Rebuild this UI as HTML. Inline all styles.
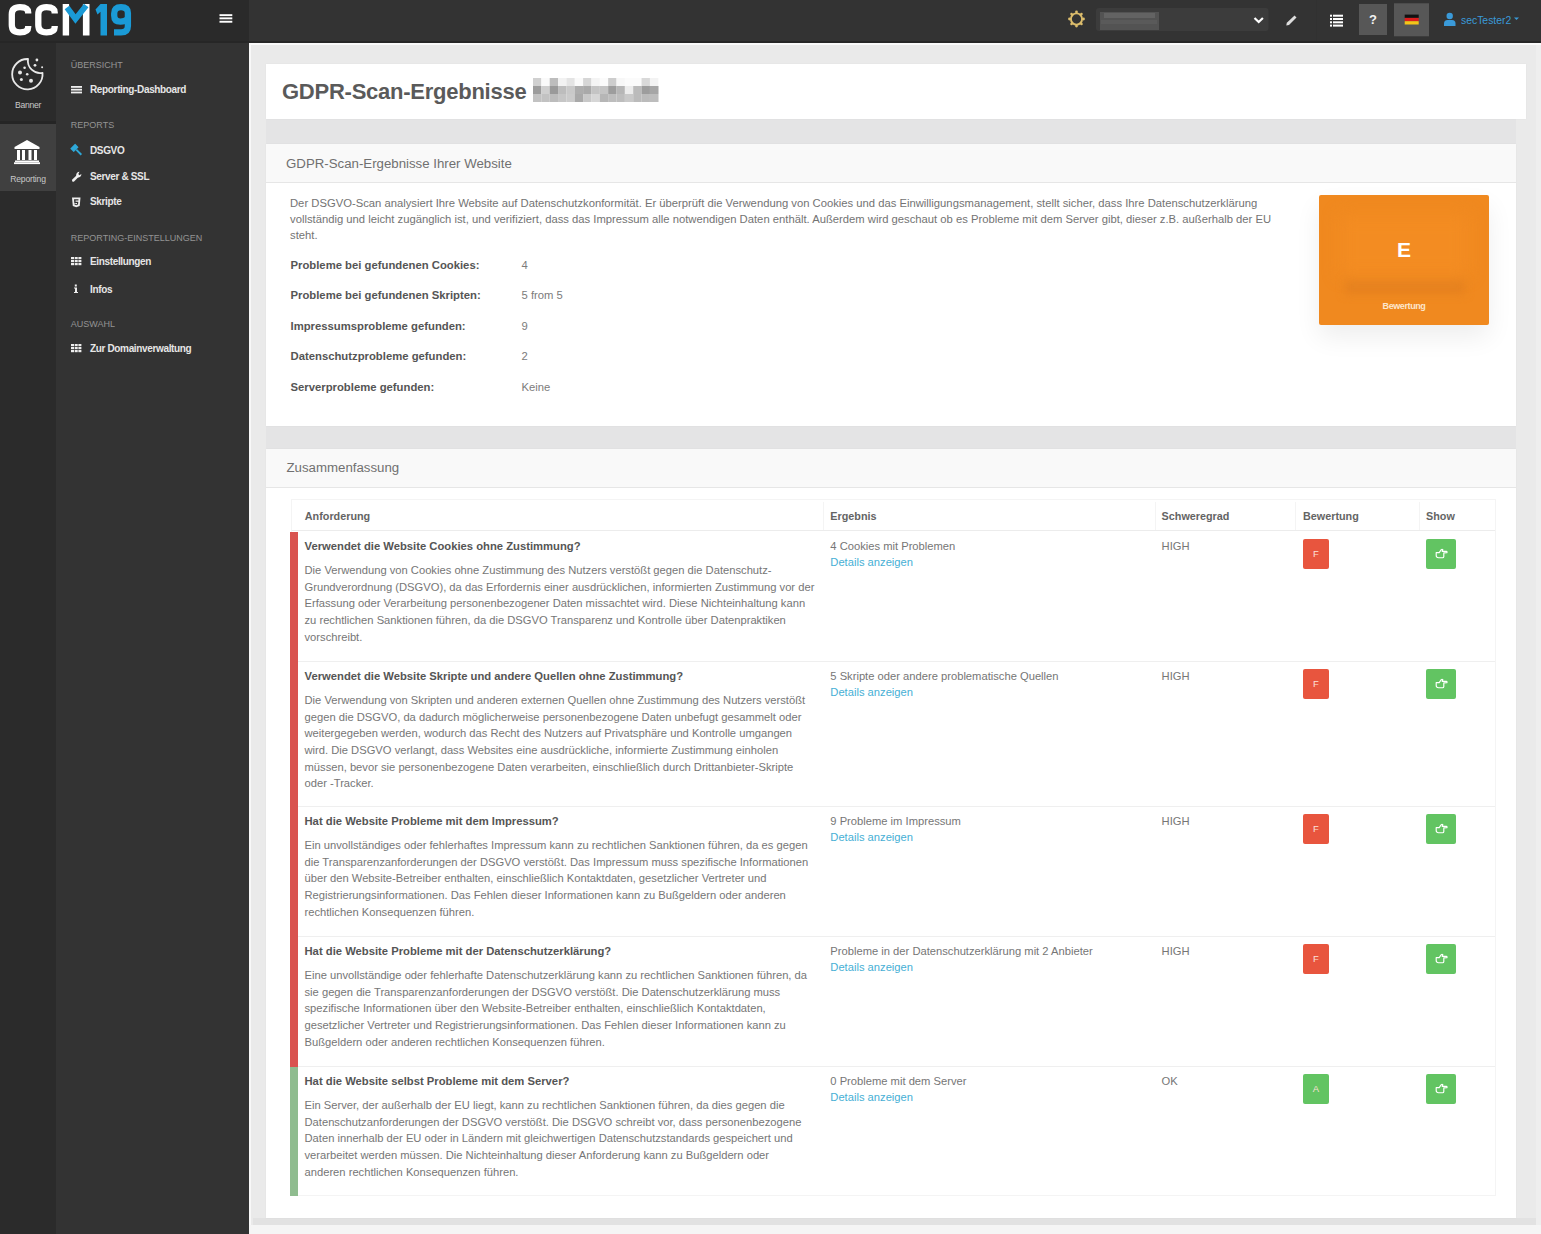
<!DOCTYPE html>
<html><head><meta charset="utf-8">
<style>
*{box-sizing:border-box}
html,body{margin:0;padding:0}
body{width:1541px;height:1234px;overflow:hidden;position:relative;background:#eaeaea;font-family:"Liberation Sans",sans-serif;color:#666}
.a{position:absolute}
.nw{white-space:nowrap}
/* sidebar */
.sh{position:absolute;left:70.8px;font-size:9px;color:#939393;letter-spacing:0}
.si{position:absolute;left:90px;font-size:10px;font-weight:bold;color:#e6e6e6;letter-spacing:-0.35px}
.ic{position:absolute;left:71px}
/* cards */
.card{position:absolute;background:#fff;box-shadow:0 0 2px rgba(0,0,0,0.04)}
.chead{position:absolute;left:0;top:0;right:0;height:39px;background:#f9f9f9;border-bottom:1px solid #e6e6e6}
.ctitle{position:absolute;left:20px;font-size:13.25px;color:#6b6b6b}
.lab{position:absolute;left:290px;font-size:11.25px;font-weight:bold;color:#555}
.val{position:absolute;left:521px;font-size:11.25px;color:#777}
</style></head>
<body>
<!-- top bar -->
<div class="a" style="left:0;top:0;width:1541px;height:43px;background:#333;border-bottom:2px solid #272727"></div>
<div class="a" style="left:0;top:0;width:249px;height:43px;background:#2a2a2a;border-bottom:2px solid #262626"></div>

<!-- sidebar columns -->
<div class="a" style="left:0;top:43px;width:56px;height:1191px;background:#2b2b2b"></div>
<div class="a" style="left:0;top:121px;width:56px;height:3px;background:#252525"></div>
<div class="a" style="left:0;top:124px;width:56px;height:67px;background:#404040"></div>
<div class="a" style="left:56px;top:43px;width:193px;height:1191px;background:#333"></div>


<!-- logo -->
<svg class="a" style="left:0;top:0" width="249" height="43" viewBox="0 0 249 43">
  <g fill="none" stroke="#fff" stroke-width="6.3" stroke-linecap="butt">
    <path d="M28.2 13.5 L28.2 12.5 Q28.2 7.15 20 7.15 Q11.8 7.15 11.8 14.5 L11.8 25 Q11.8 32.35 20 32.35 Q28.2 32.35 28.2 27 L28.2 26"/>
    <path d="M54.7 13.5 L54.7 12.5 Q54.7 7.15 46.5 7.15 Q38.3 7.15 38.3 14.5 L38.3 25 Q38.3 32.35 46.5 32.35 Q54.7 32.35 54.7 27 L54.7 26"/>
  </g>
  <rect x="62.7" y="4" width="6.4" height="31.5" fill="#fff"/>
  <rect x="82.9" y="4" width="6.6" height="31.5" fill="#fff"/>
  <polyline points="67,7.5 75.5,19 86.2,5.5" fill="none" stroke="#1a9ad6" stroke-width="5.8" stroke-linejoin="miter" stroke-miterlimit="3"/>
  <g fill="#1a9ad6">
    <path d="M95.5 9.5 L100.5 4 L107 4 L107 35.5 L100.5 35.5 L100.5 11.8 L97.5 14.5 Z"/>
  </g>
  <path d="M127.9 20 L127.9 13 Q127.9 7.15 121 7.15 Q114.2 7.15 114.2 13.5 L114.2 15.5 Q114.2 21.7 120.5 21.7 Q125 21.7 127.9 18.5 M127.9 16 L127.9 26 Q127.9 32.35 121 32.35 L114 32.35" fill="none" stroke="#1a9ad6" stroke-width="6.3"/>
  <rect x="219.5" y="14.2" width="12.8" height="1.9" fill="#fff"/>
  <rect x="219.5" y="17.4" width="12.8" height="1.9" fill="#fff"/>
  <rect x="219.5" y="20.8" width="12.8" height="1.9" fill="#fff"/>
</svg>


<!-- topbar right -->
<svg class="a" style="left:1060px;top:0" width="481" height="43" viewBox="1060 0 481 43">
  <circle cx="1076.5" cy="19" r="5.6" fill="none" stroke="#dcbd6c" stroke-width="1.9"/>
  <g fill="#dcbd6c">
    <circle cx="1076.5" cy="12" r="1.4"/><circle cx="1076.5" cy="26" r="1.4"/>
    <circle cx="1069.5" cy="19" r="1.4"/><circle cx="1083.5" cy="19" r="1.4"/>
    <circle cx="1071.55" cy="14.05" r="1.3"/><circle cx="1081.45" cy="14.05" r="1.3"/>
    <circle cx="1071.55" cy="23.95" r="1.3"/><circle cx="1081.45" cy="23.95" r="1.3"/>
  </g>
  <rect x="1096" y="8" width="172.5" height="23" rx="3" fill="#3c3c3c"/>
  <rect x="1100" y="12" width="59" height="18" fill="#535353"/>
  <rect x="1104" y="13" width="51" height="5" fill="#636363"/>
  <rect x="1101" y="20" width="56" height="4" fill="#5a5a5a"/>
  <polyline points="1254.5,18 1258.7,22 1262.9,18" fill="none" stroke="#fff" stroke-width="2.2"/>
  <path d="M1294.5 15.5 L1296.5 17.5 L1289 25 L1286.3 25.5 L1286.8 22.8 Z" fill="#dedede"/>
  <rect x="1316" y="0" width="1" height="41" fill="#313131"/>
  <g fill="#fff">
    <rect x="1330" y="14.7" width="2" height="2"/><rect x="1333" y="14.7" width="10" height="2"/>
    <rect x="1330" y="18" width="2" height="2"/><rect x="1333" y="18" width="10" height="2"/>
    <rect x="1330" y="21.3" width="2" height="2"/><rect x="1333" y="21.3" width="10" height="2"/>
    <rect x="1330" y="24.6" width="2" height="2"/><rect x="1333" y="24.6" width="10" height="2"/>
  </g>
  <rect x="1359" y="4" width="28" height="31" fill="#575757"/>
  <text x="1373" y="24" font-family="Liberation Sans" font-weight="bold" font-size="13" fill="#f2f2f2" text-anchor="middle">?</text>
  <rect x="1394" y="3.3" width="35" height="33" fill="#575757"/>
  <rect x="1404.7" y="14.6" width="14" height="3.3" fill="#111"/>
  <rect x="1404.7" y="17.9" width="14" height="3.3" fill="#dd1d1d"/>
  <rect x="1404.7" y="21.2" width="14" height="3.3" fill="#f5c518"/>
  <circle cx="1449.7" cy="16" r="3.2" fill="#3a9ad9"/>
  <path d="M1444 26 L1444 23.5 Q1444 20 1447.5 20 L1452 20 Q1455.5 20 1455.5 23.5 L1455.5 26 Z" fill="#3a9ad9"/>
</svg>
<div class="a nw" style="left:1461px;top:14.5px;font-size:10.4px;line-height:11px;color:#3a9ad9">secTester2</div>
<svg class="a" style="left:1513px;top:16px" width="8" height="6"><path d="M1 1.5 L6 1.5 L3.5 4 Z" fill="#3a9ad9"/></svg>

<!-- icon col: cookie -->
<svg class="a" style="left:0;top:43px" width="56" height="150" viewBox="0 43 56 150">
  <path d="M28 59 A15.2 15.2 0 1 0 42.5 72.8 A12.3 12.3 0 0 1 28 59 Z" fill="none" stroke="#e8e8e8" stroke-width="1.8" stroke-linejoin="round"/>
  <circle cx="20" cy="72.4" r="2" fill="#e8e8e8"/>
  <circle cx="24.6" cy="67.8" r="1.3" fill="#e8e8e8"/>
  <circle cx="27.2" cy="74.3" r="1.3" fill="#e8e8e8"/>
  <circle cx="21.4" cy="79.5" r="1.5" fill="#e8e8e8"/>
  <circle cx="31" cy="80.8" r="2" fill="#e8e8e8"/>
  <circle cx="36.9" cy="60" r="1.4" fill="#e8e8e8"/>
  <circle cx="35" cy="65.3" r="1.4" fill="#e8e8e8"/>
  <circle cx="42.1" cy="67.2" r="1" fill="#e8e8e8"/>
  <!-- bank -->
  <path d="M14.5 147 L27 140 L39.5 147 L39.5 149 L14.5 149 Z" fill="#fff"/>
  <rect x="17" y="150" width="3" height="10" fill="#fff"/>
  <rect x="22" y="150" width="3" height="10" fill="#fff"/>
  <rect x="28.5" y="150" width="3" height="10" fill="#fff"/>
  <rect x="34" y="150" width="3" height="10" fill="#fff"/>
  <rect x="15" y="160.5" width="24" height="1.6" fill="#fff"/>
  <rect x="14" y="162.3" width="26" height="1.8" fill="#fff"/>
</svg>
<div class="a nw" style="left:0;width:56px;text-align:center;top:100px;font-size:8.6px;line-height:10px;color:#c8c8c8;letter-spacing:-0.3px">Banner</div>
<div class="a nw" style="left:0;width:56px;text-align:center;top:174px;font-size:8.6px;line-height:10px;color:#c8c8c8;letter-spacing:-0.2px">Reporting</div>

<!-- menu col -->
<div class="sh nw" style="top:61.2px;line-height:9px">ÜBERSICHT</div>
<div class="sh nw" style="top:121.4px;line-height:9px">REPORTS</div>
<div class="sh nw" style="top:234.2px;line-height:9px">REPORTING-EINSTELLUNGEN</div>
<div class="sh nw" style="top:320.4px;line-height:9px">AUSWAHL</div>
<div class="si nw" style="top:84.8px;line-height:10px">Reporting-Dashboard</div>
<div class="si nw" style="top:145.7px;line-height:10px">DSGVO</div>
<div class="si nw" style="top:171.5px;line-height:10px">Server &amp; SSL</div>
<div class="si nw" style="top:197.2px;line-height:10px">Skripte</div>
<div class="si nw" style="top:257.2px;line-height:10px">Einstellungen</div>
<div class="si nw" style="top:284.5px;line-height:10px">Infos</div>
<div class="si nw" style="top:344.1px;line-height:10px">Zur Domainverwaltung</div>
<svg class="a" style="left:60px;top:80px" width="30" height="280" viewBox="60 80 30 280">
  <!-- list -->
  <rect x="71" y="86" width="11" height="1.8" fill="#eee"/>
  <rect x="71" y="88.8" width="11" height="1.8" fill="#eee"/>
  <rect x="71" y="91.6" width="11" height="1.8" fill="#eee"/>
  <!-- gavel -->
  <g transform="rotate(-45 75.5 149)" fill="#2ea8d8">
    <rect x="72" y="145" width="7" height="5" rx="0.5"/>
    <rect x="74.6" y="150" width="1.9" height="7.2"/>
  </g>
  <!-- wrench -->
  <g fill="#eee">
    <path d="M72.3 179.6 L77.2 174.7 L79 176.5 L74.1 181.4 Q73.2 182.2 72.4 181.4 Q71.6 180.5 72.3 179.6 Z"/>
    <path d="M76.3 175.9 A3.3 3.3 0 0 1 79.5 171.8 L78.3 173.9 L79.4 175.2 L81.4 174.1 A3.3 3.3 0 0 1 77.6 177.4 Z"/>
  </g>
  <!-- html5 shield -->
  <path d="M72 197.5 L80.5 197.5 L79.7 206 L76.25 207.3 L72.8 206 Z" fill="#eee"/>
  <path d="M74 199.2 L78.5 199.2 L78.4 200.5 L75.5 200.5 L75.6 201.7 L78.3 201.7 L78 204.6 L76.25 205.2 L74.5 204.6 L74.4 203.6 L75.5 203.6 L75.6 204 L76.25 204.2 L77 204 L77.1 202.9 L74.3 202.9 Z" fill="#333"/>
  <!-- grid einstellungen -->
  <g fill="#eee">
    <rect x="71" y="257" width="3" height="2.2"/><rect x="74.7" y="257" width="3" height="2.2"/><rect x="78.4" y="257" width="3" height="2.2"/>
    <rect x="71" y="260" width="3" height="2.2"/><rect x="74.7" y="260" width="3" height="2.2"/><rect x="78.4" y="260" width="3" height="2.2"/>
    <rect x="71" y="263" width="3" height="2.2"/><rect x="74.7" y="263" width="3" height="2.2"/><rect x="78.4" y="263" width="3" height="2.2"/>
  </g>
  <!-- info -->
  <rect x="74.8" y="284.5" width="2" height="2" fill="#eee"/>
  <path d="M74 287.5 L77 287.5 L77 292 L78 292 L78 293 L74 293 L74 292 L75 292 L75 288.5 L74 288.5 Z" fill="#eee"/>
  <!-- grid domain -->
  <g fill="#eee">
    <rect x="71" y="344" width="3" height="2.2"/><rect x="74.7" y="344" width="3" height="2.2"/><rect x="78.4" y="344" width="3" height="2.2"/>
    <rect x="71" y="347" width="3" height="2.2"/><rect x="74.7" y="347" width="3" height="2.2"/><rect x="78.4" y="347" width="3" height="2.2"/>
    <rect x="71" y="350" width="3" height="2.2"/><rect x="74.7" y="350" width="3" height="2.2"/><rect x="78.4" y="350" width="3" height="2.2"/>
  </g>
</svg>

<!-- content strip highlights -->
<div class="a" style="left:249px;top:43px;width:1292px;height:2px;background:#fafafa"></div>
<div class="a" style="left:249px;top:43px;width:1.5px;height:1191px;background:#f8f8f8"></div>

<div class="a" style="left:266px;top:119px;width:1250px;height:25px;background:#e4e4e5"></div>
<div class="a" style="left:266px;top:426px;width:1250px;height:23px;background:#e4e4e5"></div>
<div class="a" style="left:253px;top:1218px;width:1288px;height:7px;background:#e2e2e2"></div>
<div class="a" style="left:1536px;top:45px;width:5px;height:1180px;background:#eeeeee"></div>
<!-- title card -->
<div class="card" style="left:266px;top:64px;width:1260px;height:55px"></div>

<!-- card 2 -->
<div class="card" style="left:266px;top:144px;width:1250px;height:282px">
  <div class="chead"></div>
</div>

<!-- card 3 -->
<div class="card" style="left:266px;top:449px;width:1250px;height:769px">
  <div class="chead"></div>
</div>

<!-- CONTENT START -->
<div class="a nw" style="left:282px;top:81.38px;font-size:22px;line-height:1;font-weight:bold;color:#5a5a5a;letter-spacing:-0.25px">GDPR-Scan-Ergebnisse</div>
<svg class="a" style="left:533px;top:78px" width="128" height="24" viewBox="533 78 128 24"><rect x="533.00" y="78" width="8.40" height="8" fill="#d0d0d0"/><rect x="533.00" y="86" width="8.40" height="8" fill="#9c9c9c"/><rect x="533.00" y="94" width="8.40" height="8" fill="#c2c2c2"/><rect x="541.35" y="78" width="8.40" height="8" fill="#fafafa"/><rect x="541.35" y="86" width="8.40" height="8" fill="#cfcfcf"/><rect x="541.35" y="94" width="8.40" height="8" fill="#c2c2c2"/><rect x="549.70" y="78" width="8.40" height="8" fill="#bdbdbd"/><rect x="549.70" y="86" width="8.40" height="8" fill="#9a9a9a"/><rect x="549.70" y="94" width="8.40" height="8" fill="#bcbcbc"/><rect x="558.05" y="78" width="8.40" height="8" fill="#f2f2f2"/><rect x="558.05" y="86" width="8.40" height="8" fill="#bdbdbd"/><rect x="558.05" y="94" width="8.40" height="8" fill="#c6c6c6"/><rect x="566.40" y="78" width="8.40" height="8" fill="#e4e4e4"/><rect x="566.40" y="86" width="8.40" height="8" fill="#c9c9c9"/><rect x="566.40" y="94" width="8.40" height="8" fill="#cbcbcb"/><rect x="574.75" y="78" width="8.40" height="8" fill="#fafafa"/><rect x="574.75" y="86" width="8.40" height="8" fill="#adadad"/><rect x="574.75" y="94" width="8.40" height="8" fill="#a9a9a9"/><rect x="583.10" y="78" width="8.40" height="8" fill="#d6d6d6"/><rect x="583.10" y="86" width="8.40" height="8" fill="#a9a9a9"/><rect x="583.10" y="94" width="8.40" height="8" fill="#c8c8c8"/><rect x="591.45" y="78" width="8.40" height="8" fill="#f4f4f4"/><rect x="591.45" y="86" width="8.40" height="8" fill="#c4c4c4"/><rect x="591.45" y="94" width="8.40" height="8" fill="#d6d6d6"/><rect x="599.80" y="78" width="8.40" height="8" fill="#fbfbfb"/><rect x="599.80" y="86" width="8.40" height="8" fill="#c4c4c4"/><rect x="599.80" y="94" width="8.40" height="8" fill="#b6b6b6"/><rect x="608.15" y="78" width="8.40" height="8" fill="#cdcdcd"/><rect x="608.15" y="86" width="8.40" height="8" fill="#9d9d9d"/><rect x="608.15" y="94" width="8.40" height="8" fill="#bdbdbd"/><rect x="616.50" y="78" width="8.40" height="8" fill="#f7f7f7"/><rect x="616.50" y="86" width="8.40" height="8" fill="#b6b6b6"/><rect x="616.50" y="94" width="8.40" height="8" fill="#bdbdbd"/><rect x="624.85" y="78" width="8.40" height="8" fill="#fbfbfb"/><rect x="624.85" y="86" width="8.40" height="8" fill="#ececec"/><rect x="624.85" y="94" width="8.40" height="8" fill="#c9c9c9"/><rect x="633.20" y="78" width="8.40" height="8" fill="#fbfbfb"/><rect x="633.20" y="86" width="8.40" height="8" fill="#bbbbbb"/><rect x="633.20" y="94" width="8.40" height="8" fill="#bbbbbb"/><rect x="641.55" y="78" width="8.40" height="8" fill="#d9d9d9"/><rect x="641.55" y="86" width="8.40" height="8" fill="#9d9d9d"/><rect x="641.55" y="94" width="8.40" height="8" fill="#bbbbbb"/><rect x="649.90" y="78" width="8.40" height="8" fill="#f3f3f3"/><rect x="649.90" y="86" width="8.40" height="8" fill="#a6a6a6"/><rect x="649.90" y="94" width="8.40" height="8" fill="#bdbdbd"/><rect x="658.25" y="78" width="0.35" height="8" fill="#fafafa"/><rect x="658.25" y="86" width="0.35" height="8" fill="#b0b0b0"/><rect x="658.25" y="94" width="0.35" height="8" fill="#c4c4c4"/></svg>
<div class="a nw" style="left:286px;top:156.78px;font-size:13.25px;line-height:1;color:#707070">GDPR-Scan-Ergebnisse Ihrer Website</div>
<div class="a nw" style="left:290px;top:197.98px;font-size:11.25px;line-height:1;color:#737373">Der DSGVO-Scan analysiert Ihre Website auf Datenschutzkonformität. Er überprüft die Verwendung von Cookies und das Einwilligungsmanagement, stellt sicher, dass Ihre Datenschutzerklärung</div>
<div class="a nw" style="left:290px;top:214.08px;font-size:11.25px;line-height:1;color:#737373">vollständig und leicht zugänglich ist, und verifiziert, dass das Impressum alle notwendigen Daten enthält. Außerdem wird geschaut ob es Probleme mit dem Server gibt, dieser z.B. außerhalb der EU</div>
<div class="a nw" style="left:290px;top:230.18px;font-size:11.25px;line-height:1;color:#737373">steht.</div>
<div class="a nw" style="left:290.5px;top:259.63px;font-size:11.3px;line-height:1;font-weight:bold;color:#555">Probleme bei gefundenen Cookies:</div>
<div class="a nw" style="left:521.5px;top:259.68px;font-size:11.25px;line-height:1;color:#7b7b7b">4</div>
<div class="a nw" style="left:290.5px;top:290.18px;font-size:11.3px;line-height:1;font-weight:bold;color:#555">Probleme bei gefundenen Skripten:</div>
<div class="a nw" style="left:521.5px;top:290.23px;font-size:11.25px;line-height:1;color:#7b7b7b">5 from 5</div>
<div class="a nw" style="left:290.5px;top:320.73px;font-size:11.3px;line-height:1;font-weight:bold;color:#555">Impressumsprobleme gefunden:</div>
<div class="a nw" style="left:521.5px;top:320.78px;font-size:11.25px;line-height:1;color:#7b7b7b">9</div>
<div class="a nw" style="left:290.5px;top:351.28px;font-size:11.3px;line-height:1;font-weight:bold;color:#555">Datenschutzprobleme gefunden:</div>
<div class="a nw" style="left:521.5px;top:351.33px;font-size:11.25px;line-height:1;color:#7b7b7b">2</div>
<div class="a nw" style="left:290.5px;top:381.83px;font-size:11.3px;line-height:1;font-weight:bold;color:#555">Serverprobleme gefunden:</div>
<div class="a nw" style="left:521.5px;top:381.88px;font-size:11.25px;line-height:1;color:#7b7b7b">Keine</div>
<div class="a" style="left:1319px;top:195px;width:170px;height:130px;background:#f0891f;border-radius:2px;box-shadow:0 12px 26px rgba(0,0,0,0.07)"></div>
<div class="a" style="left:1345px;top:279px;width:120px;height:15px;background:#e6821f;filter:blur(4px)"></div>
<div class="a" style="left:1340px;top:215px;width:128px;height:60px;background:#f38c22;filter:blur(8px)"></div>
<div class="a nw" style="left:1319px;width:170px;text-align:center;top:238.8px;font-size:21px;line-height:1;font-weight:bold;color:#fff">E</div>
<div class="a nw" style="left:1319px;width:170px;text-align:center;top:302px;font-size:9px;line-height:1;font-weight:bold;letter-spacing:-0.4px;color:#fde6cc">Bewertung</div>
<div class="a nw" style="left:286.5px;top:460.98px;font-size:13.25px;line-height:1;color:#707070">Zusammenfassung</div>
<div class="a" style="left:291px;top:499px;width:1205px;height:697px;border:1px solid #f4f4f4;background:#fff"></div>
<div class="a" style="left:292px;top:500px;width:1203px;height:31px;border-bottom:1px solid #ececec"></div>
<div class="a" style="left:823px;top:502px;width:1px;height:28px;background:#f4f4f4"></div>
<div class="a" style="left:1155px;top:502px;width:1px;height:28px;background:#f4f4f4"></div>
<div class="a" style="left:1295px;top:502px;width:1px;height:28px;background:#f4f4f4"></div>
<div class="a" style="left:1419px;top:502px;width:1px;height:28px;background:#f4f4f4"></div>
<div class="a nw" style="left:304.8px;top:510.86px;font-size:10.8px;line-height:1;font-weight:bold;color:#646464">Anforderung</div>
<div class="a nw" style="left:830.3px;top:510.86px;font-size:10.8px;line-height:1;font-weight:bold;color:#646464">Ergebnis</div>
<div class="a nw" style="left:1161.6px;top:510.86px;font-size:10.8px;line-height:1;font-weight:bold;color:#646464">Schweregrad</div>
<div class="a nw" style="left:1303px;top:510.86px;font-size:10.8px;line-height:1;font-weight:bold;color:#646464">Bewertung</div>
<div class="a nw" style="left:1426px;top:510.86px;font-size:10.8px;line-height:1;font-weight:bold;color:#646464">Show</div>
<div class="a" style="left:290px;top:532px;width:8px;height:130px;background:#d9534f"></div>
<div class="a" style="left:298px;top:661px;width:1197px;height:1px;background:#efefef"></div>
<div class="a nw" style="left:304.5px;top:540.98px;font-size:11.25px;line-height:1;font-weight:bold;color:#555">Verwendet die Website Cookies ohne Zustimmung?</div>
<div class="a nw" style="left:304.5px;top:564.82px;font-size:11.2px;line-height:1;color:#767676">Die Verwendung von Cookies ohne Zustimmung des Nutzers verstößt gegen die Datenschutz-</div>
<div class="a nw" style="left:304.5px;top:581.54px;font-size:11.2px;line-height:1;color:#767676">Grundverordnung (DSGVO), da das Erfordernis einer ausdrücklichen, informierten Zustimmung vor der</div>
<div class="a nw" style="left:304.5px;top:598.26px;font-size:11.2px;line-height:1;color:#767676">Erfassung oder Verarbeitung personenbezogener Daten missachtet wird. Diese Nichteinhaltung kann</div>
<div class="a nw" style="left:304.5px;top:614.98px;font-size:11.2px;line-height:1;color:#767676">zu rechtlichen Sanktionen führen, da die DSGVO Transparenz und Kontrolle über Datenpraktiken</div>
<div class="a nw" style="left:304.5px;top:631.70px;font-size:11.2px;line-height:1;color:#767676">vorschreibt.</div>
<div class="a nw" style="left:830.3px;top:540.82px;font-size:11.2px;line-height:1;color:#767676">4 Cookies mit Problemen</div>
<div class="a nw" style="left:830.3px;top:556.52px;font-size:11.2px;line-height:1;color:#46afd5">Details anzeigen</div>
<div class="a nw" style="left:1161.6px;top:540.82px;font-size:11.2px;line-height:1;color:#767676">HIGH</div>
<div class="a" style="left:1303px;top:538.6px;width:26px;height:30px;background:#e8553e;border-radius:2px;color:#fde0d8;font-size:9.5px;line-height:30px;text-align:center">F</div>
<div class="a" style="left:1426px;top:538.6px;width:30px;height:30px;background:#62c462;border-radius:2px;display:flex;align-items:center;justify-content:center"><svg width="13" height="11" viewBox="0 0 13 11"><path d="M1.2 4.6 L4.2 4.6 L6.3 1.6 Q7.1 0.9 7.8 1.7 L7.2 3.4 L11.3 3.4 Q12.4 3.6 11.9 4.8 L8.8 4.9 L8.8 8.6 Q8.7 9.7 7.6 9.7 L3.6 9.7 Q1.2 9.7 1.2 7.6 Z" fill="none" stroke="#fff" stroke-width="1.15" stroke-linejoin="round"/></svg></div>
<div class="a" style="left:290px;top:662px;width:8px;height:145px;background:#d9534f"></div>
<div class="a" style="left:298px;top:806px;width:1197px;height:1px;background:#efefef"></div>
<div class="a nw" style="left:304.5px;top:670.98px;font-size:11.25px;line-height:1;font-weight:bold;color:#555">Verwendet die Website Skripte und andere Quellen ohne Zustimmung?</div>
<div class="a nw" style="left:304.5px;top:694.82px;font-size:11.2px;line-height:1;color:#767676">Die Verwendung von Skripten und anderen externen Quellen ohne Zustimmung des Nutzers verstößt</div>
<div class="a nw" style="left:304.5px;top:711.54px;font-size:11.2px;line-height:1;color:#767676">gegen die DSGVO, da dadurch möglicherweise personenbezogene Daten unbefugt gesammelt oder</div>
<div class="a nw" style="left:304.5px;top:728.26px;font-size:11.2px;line-height:1;color:#767676">weitergegeben werden, wodurch das Recht des Nutzers auf Privatsphäre und Kontrolle umgangen</div>
<div class="a nw" style="left:304.5px;top:744.98px;font-size:11.2px;line-height:1;color:#767676">wird. Die DSGVO verlangt, dass Websites eine ausdrückliche, informierte Zustimmung einholen</div>
<div class="a nw" style="left:304.5px;top:761.70px;font-size:11.2px;line-height:1;color:#767676">müssen, bevor sie personenbezogene Daten verarbeiten, einschließlich durch Drittanbieter-Skripte</div>
<div class="a nw" style="left:304.5px;top:778.42px;font-size:11.2px;line-height:1;color:#767676">oder -Tracker.</div>
<div class="a nw" style="left:830.3px;top:670.82px;font-size:11.2px;line-height:1;color:#767676">5 Skripte oder andere problematische Quellen</div>
<div class="a nw" style="left:830.3px;top:686.52px;font-size:11.2px;line-height:1;color:#46afd5">Details anzeigen</div>
<div class="a nw" style="left:1161.6px;top:670.82px;font-size:11.2px;line-height:1;color:#767676">HIGH</div>
<div class="a" style="left:1303px;top:668.6px;width:26px;height:30px;background:#e8553e;border-radius:2px;color:#fde0d8;font-size:9.5px;line-height:30px;text-align:center">F</div>
<div class="a" style="left:1426px;top:668.6px;width:30px;height:30px;background:#62c462;border-radius:2px;display:flex;align-items:center;justify-content:center"><svg width="13" height="11" viewBox="0 0 13 11"><path d="M1.2 4.6 L4.2 4.6 L6.3 1.6 Q7.1 0.9 7.8 1.7 L7.2 3.4 L11.3 3.4 Q12.4 3.6 11.9 4.8 L8.8 4.9 L8.8 8.6 Q8.7 9.7 7.6 9.7 L3.6 9.7 Q1.2 9.7 1.2 7.6 Z" fill="none" stroke="#fff" stroke-width="1.15" stroke-linejoin="round"/></svg></div>
<div class="a" style="left:290px;top:807px;width:8px;height:130px;background:#d9534f"></div>
<div class="a" style="left:298px;top:936px;width:1197px;height:1px;background:#efefef"></div>
<div class="a nw" style="left:304.5px;top:815.98px;font-size:11.25px;line-height:1;font-weight:bold;color:#555">Hat die Website Probleme mit dem Impressum?</div>
<div class="a nw" style="left:304.5px;top:839.82px;font-size:11.2px;line-height:1;color:#767676">Ein unvollständiges oder fehlerhaftes Impressum kann zu rechtlichen Sanktionen führen, da es gegen</div>
<div class="a nw" style="left:304.5px;top:856.54px;font-size:11.2px;line-height:1;color:#767676">die Transparenzanforderungen der DSGVO verstößt. Das Impressum muss spezifische Informationen</div>
<div class="a nw" style="left:304.5px;top:873.26px;font-size:11.2px;line-height:1;color:#767676">über den Website-Betreiber enthalten, einschließlich Kontaktdaten, gesetzlicher Vertreter und</div>
<div class="a nw" style="left:304.5px;top:889.98px;font-size:11.2px;line-height:1;color:#767676">Registrierungsinformationen. Das Fehlen dieser Informationen kann zu Bußgeldern oder anderen</div>
<div class="a nw" style="left:304.5px;top:906.70px;font-size:11.2px;line-height:1;color:#767676">rechtlichen Konsequenzen führen.</div>
<div class="a nw" style="left:830.3px;top:815.82px;font-size:11.2px;line-height:1;color:#767676">9 Probleme im Impressum</div>
<div class="a nw" style="left:830.3px;top:831.52px;font-size:11.2px;line-height:1;color:#46afd5">Details anzeigen</div>
<div class="a nw" style="left:1161.6px;top:815.82px;font-size:11.2px;line-height:1;color:#767676">HIGH</div>
<div class="a" style="left:1303px;top:813.6px;width:26px;height:30px;background:#e8553e;border-radius:2px;color:#fde0d8;font-size:9.5px;line-height:30px;text-align:center">F</div>
<div class="a" style="left:1426px;top:813.6px;width:30px;height:30px;background:#62c462;border-radius:2px;display:flex;align-items:center;justify-content:center"><svg width="13" height="11" viewBox="0 0 13 11"><path d="M1.2 4.6 L4.2 4.6 L6.3 1.6 Q7.1 0.9 7.8 1.7 L7.2 3.4 L11.3 3.4 Q12.4 3.6 11.9 4.8 L8.8 4.9 L8.8 8.6 Q8.7 9.7 7.6 9.7 L3.6 9.7 Q1.2 9.7 1.2 7.6 Z" fill="none" stroke="#fff" stroke-width="1.15" stroke-linejoin="round"/></svg></div>
<div class="a" style="left:290px;top:937px;width:8px;height:130px;background:#d9534f"></div>
<div class="a" style="left:298px;top:1066px;width:1197px;height:1px;background:#efefef"></div>
<div class="a nw" style="left:304.5px;top:945.98px;font-size:11.25px;line-height:1;font-weight:bold;color:#555">Hat die Website Probleme mit der Datenschutzerklärung?</div>
<div class="a nw" style="left:304.5px;top:969.82px;font-size:11.2px;line-height:1;color:#767676">Eine unvollständige oder fehlerhafte Datenschutzerklärung kann zu rechtlichen Sanktionen führen, da</div>
<div class="a nw" style="left:304.5px;top:986.54px;font-size:11.2px;line-height:1;color:#767676">sie gegen die Transparenzanforderungen der DSGVO verstößt. Die Datenschutzerklärung muss</div>
<div class="a nw" style="left:304.5px;top:1003.26px;font-size:11.2px;line-height:1;color:#767676">spezifische Informationen über den Website-Betreiber enthalten, einschließlich Kontaktdaten,</div>
<div class="a nw" style="left:304.5px;top:1019.98px;font-size:11.2px;line-height:1;color:#767676">gesetzlicher Vertreter und Registrierungsinformationen. Das Fehlen dieser Informationen kann zu</div>
<div class="a nw" style="left:304.5px;top:1036.70px;font-size:11.2px;line-height:1;color:#767676">Bußgeldern oder anderen rechtlichen Konsequenzen führen.</div>
<div class="a nw" style="left:830.3px;top:945.82px;font-size:11.2px;line-height:1;color:#767676">Probleme in der Datenschutzerklärung mit 2 Anbieter</div>
<div class="a nw" style="left:830.3px;top:961.52px;font-size:11.2px;line-height:1;color:#46afd5">Details anzeigen</div>
<div class="a nw" style="left:1161.6px;top:945.82px;font-size:11.2px;line-height:1;color:#767676">HIGH</div>
<div class="a" style="left:1303px;top:943.6px;width:26px;height:30px;background:#e8553e;border-radius:2px;color:#fde0d8;font-size:9.5px;line-height:30px;text-align:center">F</div>
<div class="a" style="left:1426px;top:943.6px;width:30px;height:30px;background:#62c462;border-radius:2px;display:flex;align-items:center;justify-content:center"><svg width="13" height="11" viewBox="0 0 13 11"><path d="M1.2 4.6 L4.2 4.6 L6.3 1.6 Q7.1 0.9 7.8 1.7 L7.2 3.4 L11.3 3.4 Q12.4 3.6 11.9 4.8 L8.8 4.9 L8.8 8.6 Q8.7 9.7 7.6 9.7 L3.6 9.7 Q1.2 9.7 1.2 7.6 Z" fill="none" stroke="#fff" stroke-width="1.15" stroke-linejoin="round"/></svg></div>
<div class="a" style="left:290px;top:1067px;width:8px;height:129px;background:#8fbc8f"></div>
<div class="a nw" style="left:304.5px;top:1075.98px;font-size:11.25px;line-height:1;font-weight:bold;color:#555">Hat die Website selbst Probleme mit dem Server?</div>
<div class="a nw" style="left:304.5px;top:1099.82px;font-size:11.2px;line-height:1;color:#767676">Ein Server, der außerhalb der EU liegt, kann zu rechtlichen Sanktionen führen, da dies gegen die</div>
<div class="a nw" style="left:304.5px;top:1116.54px;font-size:11.2px;line-height:1;color:#767676">Datenschutzanforderungen der DSGVO verstößt. Die DSGVO schreibt vor, dass personenbezogene</div>
<div class="a nw" style="left:304.5px;top:1133.26px;font-size:11.2px;line-height:1;color:#767676">Daten innerhalb der EU oder in Ländern mit gleichwertigen Datenschutzstandards gespeichert und</div>
<div class="a nw" style="left:304.5px;top:1149.98px;font-size:11.2px;line-height:1;color:#767676">verarbeitet werden müssen. Die Nichteinhaltung dieser Anforderung kann zu Bußgeldern oder</div>
<div class="a nw" style="left:304.5px;top:1166.70px;font-size:11.2px;line-height:1;color:#767676">anderen rechtlichen Konsequenzen führen.</div>
<div class="a nw" style="left:830.3px;top:1075.82px;font-size:11.2px;line-height:1;color:#767676">0 Probleme mit dem Server</div>
<div class="a nw" style="left:830.3px;top:1091.52px;font-size:11.2px;line-height:1;color:#46afd5">Details anzeigen</div>
<div class="a nw" style="left:1161.6px;top:1075.82px;font-size:11.2px;line-height:1;color:#767676">OK</div>
<div class="a" style="left:1303px;top:1073.6px;width:26px;height:30px;background:#62c462;border-radius:2px;color:#fde0d8;font-size:9.5px;line-height:30px;text-align:center">A</div>
<div class="a" style="left:1426px;top:1073.6px;width:30px;height:30px;background:#62c462;border-radius:2px;display:flex;align-items:center;justify-content:center"><svg width="13" height="11" viewBox="0 0 13 11"><path d="M1.2 4.6 L4.2 4.6 L6.3 1.6 Q7.1 0.9 7.8 1.7 L7.2 3.4 L11.3 3.4 Q12.4 3.6 11.9 4.8 L8.8 4.9 L8.8 8.6 Q8.7 9.7 7.6 9.7 L3.6 9.7 Q1.2 9.7 1.2 7.6 Z" fill="none" stroke="#fff" stroke-width="1.15" stroke-linejoin="round"/></svg></div>

<!-- CONTENT END -->
<!-- footer -->
<div class="a" style="left:249px;top:1225px;width:1292px;height:9px;background:#f5f5f5"></div>
</body></html>
